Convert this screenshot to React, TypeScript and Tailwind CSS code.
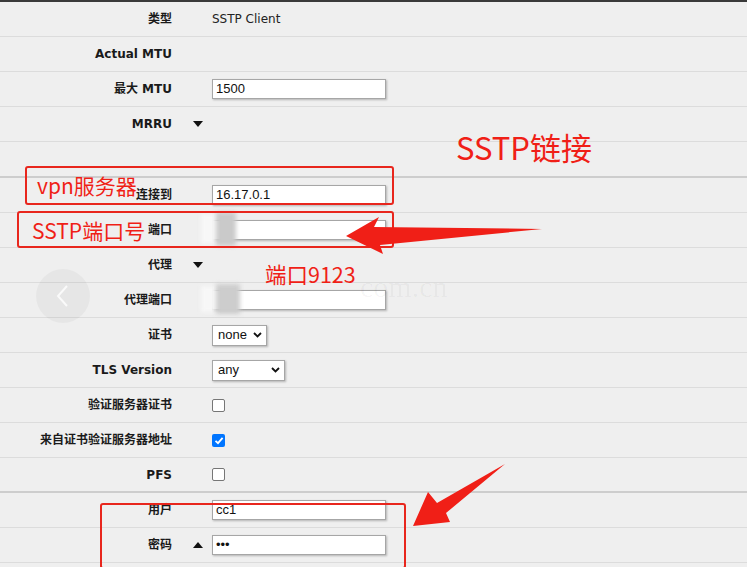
import React from 'react';

type Row = {
  label: string;
  toggle?: 'down' | 'up';
  kind?: 'text' | 'input' | 'select' | 'check' | 'none';
  value?: string;
  width?: string;
  checked?: boolean;
  last?: boolean;
};

const labelFont = { fontFamily: '"DejaVu Sans", "Noto Sans CJK SC", sans-serif' };
const valueFont = { fontFamily: '"Liberation Sans", "Noto Sans CJK SC", sans-serif' };
const noteFont = { fontFamily: '"Noto Sans CJK SC", "Noto Sans", sans-serif' };

const topRows: Row[] = [
  { label: '类型', kind: 'text', value: 'SSTP Client' },
  { label: 'Actual MTU', kind: 'none' },
  { label: '最大 MTU', kind: 'input', value: '1500' },
  { label: 'MRRU', toggle: 'down', kind: 'none' },
];

const midRows: Row[] = [
  { label: '连接到', kind: 'input', value: '16.17.0.1' },
  { label: '端口', kind: 'input', value: '' },
  { label: '代理', toggle: 'down', kind: 'none' },
  { label: '代理端口', kind: 'input', value: '' },
  { label: '证书', kind: 'select', value: 'none', width: 'w-[55px]' },
  { label: 'TLS Version', kind: 'select', value: 'any', width: 'w-[73px]' },
  { label: '验证服务器证书', kind: 'check' },
  { label: '来自证书验证服务器地址', kind: 'check', checked: true },
  { label: 'PFS', kind: 'check', last: true },
];

const authRows: Row[] = [
  { label: '用户', kind: 'input', value: 'cc1' },
  { label: '密码', toggle: 'up', kind: 'input', value: '•••' },
];

const Triangle = ({ dir }: { dir: 'down' | 'up' }) => (
  <svg width="10" height="6" viewBox="0 0 10 6" className="block">
    {dir === 'down' ? <polygon points="0,0 10,0 5,6" fill="#111" /> : <polygon points="0,6 10,6 5,0" fill="#111" />}
  </svg>
);

const Field = ({ row }: { row: Row }) => {
  if (row.kind === 'text') {
    return <span className="text-[12px] text-[#222]" style={labelFont}>{row.value}</span>;
  }
  if (row.kind === 'input') {
    return (
      <div
        className="w-[174px] h-[20px] bg-white border border-[#a6a6a6] shadow-[1px_1px_2px_rgba(0,0,0,0.25)] flex items-center px-[3px] text-[13px] text-[#111]"
        style={valueFont}
      >
        {row.value}
      </div>
    );
  }
  if (row.kind === 'select') {
    return (
      <div
        className={`${row.width} h-[21px] bg-white border border-[#a6a6a6] shadow-[1px_1px_2px_rgba(0,0,0,0.25)] flex items-center justify-between pl-[5px] pr-[4px] text-[13px] text-[#111]`}
        style={valueFont}
      >
        <span>{row.value}</span>
        <svg width="9" height="6" viewBox="0 0 9 6">
          <polyline points="1,1 4.5,4.5 8,1" fill="none" stroke="#111" strokeWidth="1.8" />
        </svg>
      </div>
    );
  }
  if (row.kind === 'check') {
    return row.checked ? (
      <div className="w-[13px] h-[13px] rounded-[2px] bg-[#0075ff] flex items-center justify-center">
        <svg width="10" height="9" viewBox="0 0 10 9">
          <polyline points="1.5,4.8 4,7.2 8.6,1.8" fill="none" stroke="#fff" strokeWidth="1.8" />
        </svg>
      </div>
    ) : (
      <div className="w-[13px] h-[13px] rounded-[2px] bg-white border border-[#767676]" />
    );
  }
  return null;
};

const FormRow = ({ row }: { row: Row }) => (
  <div
    className={`grid grid-cols-[172px_40px_1fr] items-center h-[35px] ${
      row.last ? 'border-b-2 border-[#cdcdcd]' : 'border-b border-[#dcdcdc]'
    }`}
  >
    <div className="text-right text-[12px] font-bold text-[#1a1a1a] whitespace-nowrap" style={labelFont}>
      {row.label}
    </div>
    <div className="pl-[21px]">{row.toggle && <Triangle dir={row.toggle} />}</div>
    <div className="flex items-center">
      <Field row={row} />
    </div>
  </div>
);

const Box = ({ className }: { className: string }) => (
  <div className={`absolute border-[2.5px] border-[#e8261d] rounded-[3px] ${className}`} />
);

export default function App() {
  return (
    <div className="relative w-[747px] h-[567px] overflow-hidden bg-[#efefef]">
      <div className="h-[2px] bg-[#3a3a3a]" />
      {topRows.map((r) => (
        <FormRow key={r.label} row={r} />
      ))}
      <div className="h-[36px] border-b-2 border-[#cdcdcd]" />
      {midRows.map((r) => (
        <FormRow key={r.label} row={r} />
      ))}
      {authRows.map((r) => (
        <FormRow key={r.label} row={r} />
      ))}

      {/* back button ghost */}
      <div className="absolute left-[36px] top-[269px] w-[54px] h-[54px] rounded-full bg-[rgba(0,0,0,0.035)] flex items-center justify-center">
        <svg width="14" height="24" viewBox="0 0 14 24">
          <polyline points="11,2 2,12 11,22" fill="none" stroke="#fafafa" strokeWidth="2" />
        </svg>
      </div>

      {/* watermark */}
      <div
        className="absolute left-[360px] top-[264px] text-[30px] text-[rgba(0,0,0,0.04)] whitespace-nowrap"
        style={{ fontFamily: '"Liberation Serif", serif' }}
      >
        com.cn
      </div>

      {/* mosaics */}
      <div className="absolute left-[201px] top-[214px] w-[16px] h-[30px] bg-[#f7f7f7] blur-[2px]" />
      <div className="absolute left-[216px] top-[212px] w-[20px] h-[34px] bg-[#cacaca] blur-[2px]" />
      <div className="absolute left-[201px] top-[286px] w-[16px] h-[26px] bg-[#f7f7f7] blur-[2px]" />
      <div className="absolute left-[216px] top-[284px] w-[24px] h-[30px] bg-[#cdcdcd] blur-[2px]" />

      {/* annotations */}
      <Box className="left-[25px] top-[166px] w-[369px] h-[39px]" />
      <Box className="left-[17px] top-[211px] w-[377px] h-[37px]" />
      <Box className="left-[100px] top-[503px] w-[306px] h-[66px]" />

      <div className="absolute left-[37px] top-[171px] text-[21px] leading-[28px] text-[#f01f17]" style={noteFont}>
        vpn服务器
      </div>
      <div className="absolute left-[32px] top-[216px] text-[21px] leading-[28px] text-[#f01f17]" style={noteFont}>
        SSTP端口号
      </div>
      <div className="absolute left-[456px] top-[126px] text-[31px] leading-[42px] text-[#f01f17]" style={noteFont}>
        SSTP链接
      </div>
      <div className="absolute left-[265px] top-[260px] text-[21.5px] leading-[28px] text-[#f01f17]" style={noteFont}>
        端口9123
      </div>

      <svg className="absolute left-0 top-0" width="747" height="567" viewBox="0 0 747 567">
        <polygon points="346,236 379,217 374,227 542,229 380,245 383,254" fill="#f01f17" />
        <polygon points="413,526 428,492 437,503 505,464 446,513 450,522" fill="#f01f17" />
      </svg>
    </div>
  );
}
